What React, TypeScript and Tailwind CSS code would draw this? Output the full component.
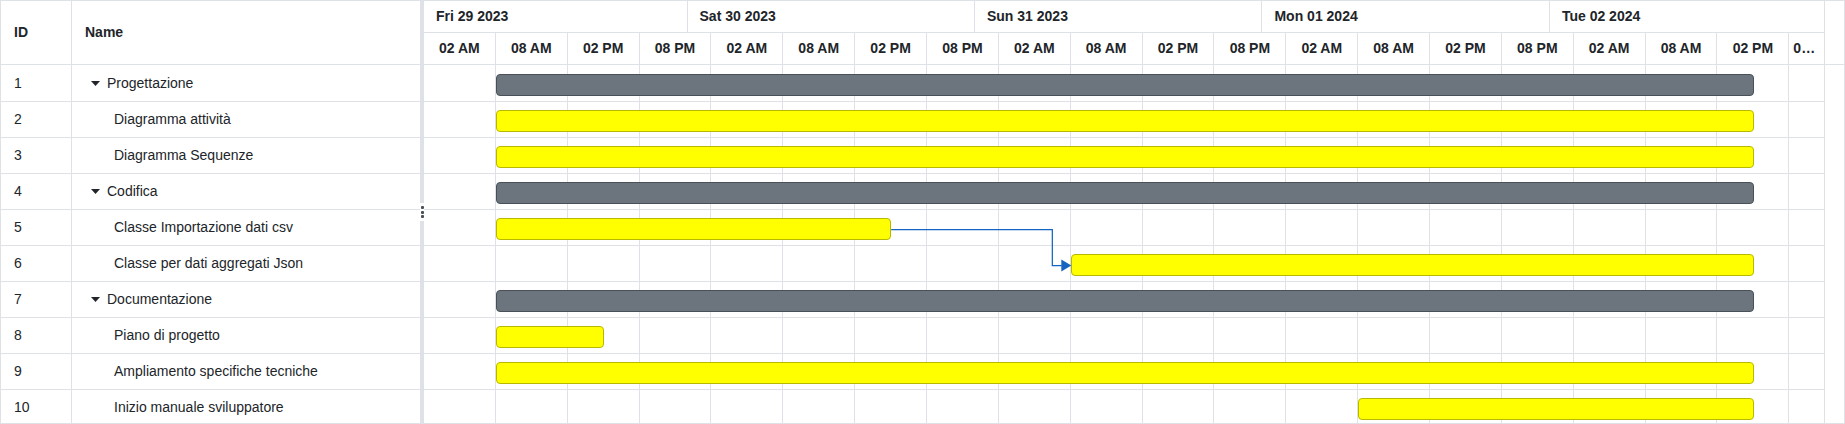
import React from "react";

const CELL = 71.87;
const HOUR = CELL / 6;

type Task = {
  id: number;
  name: string;
  parent?: boolean;
  start: number; // hours from Fri 02:00
  end: number;
};

const tasks: Task[] = [
  { id: 1, name: "Progettazione", parent: true, start: 6, end: 111 },
  { id: 2, name: "Diagramma attività", start: 6, end: 111 },
  { id: 3, name: "Diagramma Sequenze", start: 6, end: 111 },
  { id: 4, name: "Codifica", parent: true, start: 6, end: 111 },
  { id: 5, name: "Classe Importazione dati csv", start: 6, end: 39 },
  { id: 6, name: "Classe per dati aggregati Json", start: 54, end: 111 },
  { id: 7, name: "Documentazione", parent: true, start: 6, end: 111 },
  { id: 8, name: "Piano di progetto", start: 6, end: 15 },
  { id: 9, name: "Ampliamento specifiche tecniche", start: 6, end: 111 },
  { id: 10, name: "Inizio manuale sviluppatore", start: 78, end: 111 },
];

const hourLabels = Array.from({ length: 20 }, (_, i) => ["02 AM", "08 AM", "02 PM", "08 PM"][i % 4]);

const dates = [
  { label: "Fri 29 2023", cls: "w-[263.52px]" },
  { label: "Sat 30 2023", cls: "w-[287.48px]" },
  { label: "Sun 31 2023", cls: "w-[287.48px]" },
  { label: "Mon 01 2024", cls: "w-[287.48px]" },
  { label: "Tue 02 2024", cls: "w-[275.5px]" },
];

function Caret() {
  return (
    <svg width="9" height="5" viewBox="0 0 9 5" className="shrink-0">
      <path d="M0 0H9L4.5 5Z" fill="#212529" />
    </svg>
  );
}

function GridCells() {
  return (
    <>
      {hourLabels.map((_, i) => (
        <div
          key={i}
          className={
            (i === 19 ? "w-[35.93px]" : "w-[71.87px]") +
            " h-full shrink-0 border-r border-[#dee2e6]"
          }
        />
      ))}
    </>
  );
}

export default function App() {
  const rowTop = (i: number) => (i === 0 ? 0 : 37 + (i - 1) * 36);
  const barTop = (i: number) => rowTop(i) + (i === 0 ? 9 : 8);
  const y1 = barTop(4) + 11;
  const y2 = barTop(5) + 11;
  const x1 = tasks[4].end * HOUR;
  const x2 = tasks[5].start * HOUR;
  const xm = x2 - 18.5;

  return (
    <div className="w-[1845px] h-[424px] bg-white border border-[#dee2e6] flex overflow-hidden text-[14px] text-[#212529] font-['Liberation_Sans',Arial,sans-serif]">
      {/* Left table */}
      <div className="w-[419px] shrink-0 flex flex-col">
        <div className="h-[64px] shrink-0 flex border-b border-[#dee2e6] font-bold">
          <div className="w-[71px] shrink-0 border-r border-[#dee2e6] flex items-center pl-[13px]">ID</div>
          <div className="flex-1 flex items-center pl-[13px]">Name</div>
        </div>
        {tasks.map((t, i) => (
          <div
            key={t.id}
            className={(i === 0 ? "h-[37px]" : "h-[36px]") + " shrink-0 flex border-b border-[#dee2e6]"}
          >
            <div className="w-[71px] shrink-0 border-r border-[#dee2e6] flex items-center pl-[13px]">{t.id}</div>
            {t.parent ? (
              <div className="flex-1 flex items-center pl-[19px] gap-[7px] whitespace-nowrap">
                <Caret />
                <span>{t.name}</span>
              </div>
            ) : (
              <div className="flex-1 flex items-center pl-[42px] whitespace-nowrap">{t.name}</div>
            )}
          </div>
        ))}
      </div>

      {/* Splitter */}
      <div className="w-[4px] shrink-0 flex flex-col">
        <div className="flex-1 bg-[#dee2e6]" />
        <div className="h-[18px] shrink-0 bg-white flex flex-col items-center justify-center gap-[1.5px]">
          <div className="w-[3px] h-[3px] rounded-[1px] bg-[#495057]" />
          <div className="w-[3px] h-[3px] rounded-[1px] bg-[#495057]" />
          <div className="w-[3px] h-[3px] rounded-[1px] bg-[#495057]" />
        </div>
        <div className="flex-1 bg-[#dee2e6]" />
      </div>

      {/* Gantt */}
      <div className="flex-1 flex flex-col min-w-0">
        <div className="h-[64px] shrink-0 border-b border-[#dee2e6] flex flex-col font-bold">
          <div className="h-[32px] shrink-0 flex">
            {dates.map((d) => (
              <div
                key={d.label}
                className={d.cls + " shrink-0 border-r border-b border-[#dee2e6] flex items-center pl-[12px] whitespace-nowrap"}
              >
                {d.label}
              </div>
            ))}
          </div>
          <div className="flex-1 flex">
            {hourLabels.map((h, i) =>
              i === 19 ? (
                <div
                  key={i}
                  className="w-[35.93px] shrink-0 border-r border-[#dee2e6] flex items-center pl-[4px] pr-[8px] overflow-hidden"
                >
                  <span className="block min-w-0 truncate">{h}</span>
                </div>
              ) : (
                <div
                  key={i}
                  className="w-[71.87px] shrink-0 border-r border-[#dee2e6] flex items-center justify-center"
                >
                  <span className="whitespace-nowrap">{h}</span>
                </div>
              )
            )}
          </div>
        </div>

        <div className="relative flex-1 flex flex-col">
          {tasks.map((t, i) => (
            <div
              key={t.id}
              className={(i === 0 ? "h-[37px]" : "h-[36px]") + " shrink-0 relative"}
            >
              <div className="w-[1401.46px] h-full flex border-b border-[#dee2e6]">
                <GridCells />
              </div>
              <div
                className={
                  (i === 0 ? "top-[9px]" : "top-[8px]") +
                  " absolute h-[22px] rounded-[4px] border " +
                  (t.parent ? "bg-[#6c757d] border-[#495057]" : "bg-[#ffff00] border-[#b8b800]")
                }
                style={{ left: t.start * HOUR, width: (t.end - t.start) * HOUR }}
              />
            </div>
          ))}
          <svg
            className="absolute left-0 top-0 pointer-events-none"
            width="1420"
            height="360"
            viewBox="0 0 1420 360"
          >
            <path
              d={`M${x1} ${y1 + 0.5}H${xm}V${y2 + 0.5}H${x2 - 9}`}
              fill="none"
              stroke="#1565c0"
              strokeWidth="1.25"
            />
            <path d={`M${x2 - 9.5} ${y2 - 5.5}L${x2 + 0.5} ${y2 + 0.5}L${x2 - 9.5} ${y2 + 6.5}Z`} fill="#1565c0" />
          </svg>
        </div>
      </div>
    </div>
  );
}
